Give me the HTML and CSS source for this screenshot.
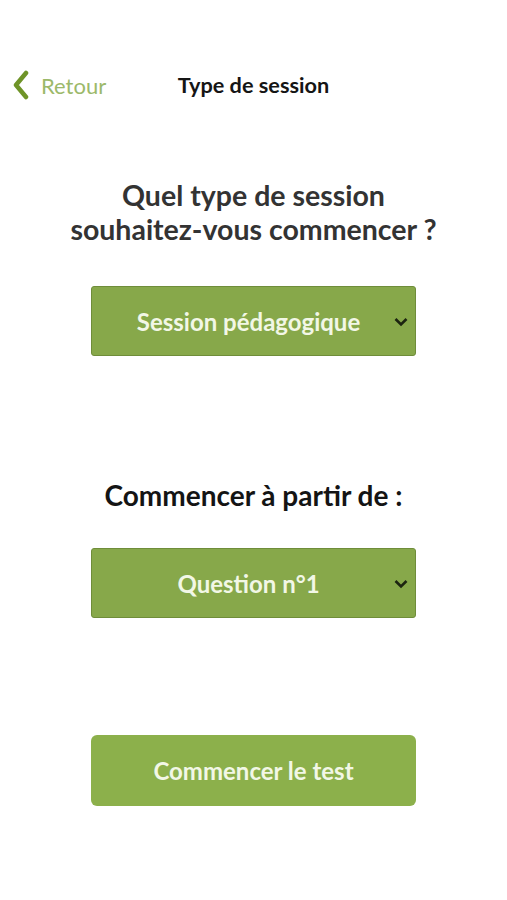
FILE: index.html
```html
<!DOCTYPE html>
<html lang="fr">
<head>
<meta charset="utf-8">
<title>Type de session</title>
<link rel="stylesheet" href="styles.css">
</head>
<body>
<div class="screen">
  <header class="topbar">
    <a class="back" href="#">
      <svg class="back-icon" width="18" height="30" viewBox="0 0 18 30"><path d="M14 3 L4 15 L14 27" fill="none" stroke="#6f9428" stroke-width="4.5" stroke-linecap="round" stroke-linejoin="round"/></svg>
      <span class="back-label">Retour</span>
    </a>
    <h1 class="page-title">Type de session</h1>
    <span></span>
  </header>

  <main class="content">
    <h2 class="question">Quel type de session<br>souhaitez-vous commencer ?</h2>
    <div class="select">
      <span class="select-label">Session pédagogique</span>
      <svg class="chev" width="16" height="10" viewBox="0 0 16 10"><path d="M2.5 2 L8 7.5 L13.5 2" fill="none" stroke="#1c2410" stroke-width="2.6"/></svg>
    </div>

    <h2 class="question second">Commencer à partir de :</h2>
    <div class="select">
      <span class="select-label">Question n°1</span>
      <svg class="chev" width="16" height="10" viewBox="0 0 16 10"><path d="M2.5 2 L8 7.5 L13.5 2" fill="none" stroke="#1c2410" stroke-width="2.6"/></svg>
    </div>

    <button class="start">Commencer le test</button>
  </main>
</div>
</body>
</html>
```

FILE: styles.css
```css
* { box-sizing: border-box; }
html, body { margin: 0; padding: 0; background: #fff; }
body { font-family: Lato, "Open Sans", sans-serif; }

.screen { width: 507px; min-height: 900px; }

.topbar {
  display: grid;
  grid-template-columns: 1fr auto 1fr;
  align-items: center;
  padding: 68px 0 0 0;
  height: 102px;
}
.back {
  display: flex;
  align-items: center;
  gap: 11px;
  padding-left: 12px;
  text-decoration: none;
}
.back-icon { display: block; }
.back-label {
  font-size: 22px;
  color: #9cb96a;
  font-weight: 400;
}
.page-title {
  margin: 0;
  font-size: 21.7px;
  font-weight: 700;
  color: #151515;
}

.content {
  display: flex;
  flex-direction: column;
  align-items: center;
  padding-top: 76px;
}
.question {
  margin: 0;
  text-align: center;
  font-size: 28.5px;
  line-height: 34px;
  font-weight: 700;
  color: #333333;
}
.question.second { margin-top: 122px; color: #141414; font-size: 28px; }

.select {
  margin-top: 40px;
  width: 325px;
  height: 70px;
  background: #87a84a;
  border: 1px solid #6f8d3a;
  border-radius: 3px;
  display: flex;
  align-items: center;
  justify-content: center;
  position: relative;
  padding-right: 10px;
}
.select-label {
  color: #f2f7e6;
  font-size: 24px;
  font-weight: 700;
}
.chev { position: absolute; right: 6px; top: 30px; }

.question.second + .select { margin-top: 36px; }

.start {
  margin-top: 117px;
  width: 325px;
  height: 71px;
  border: none;
  border-radius: 6px;
  background: #8cb04b;
  color: #f2f7e6;
  font-family: Lato, sans-serif;
  font-size: 24px;
  font-weight: 700;
}
```
